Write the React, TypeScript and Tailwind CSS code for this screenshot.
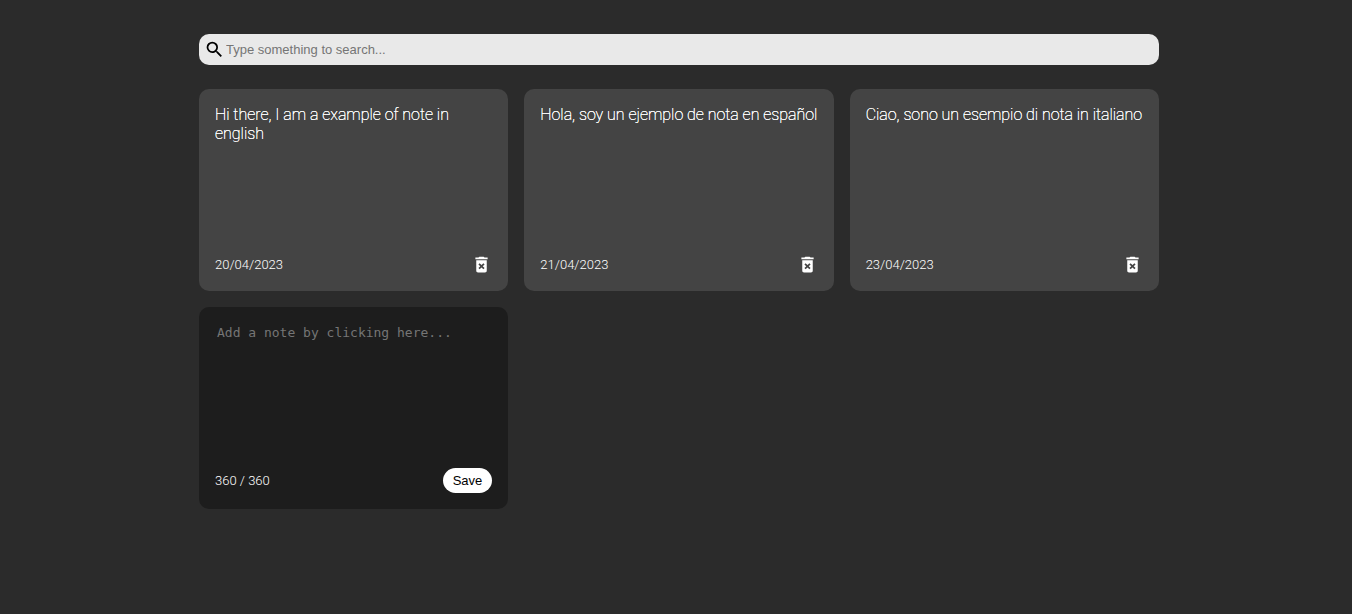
import { useState } from "react";
import { MdDeleteForever, MdSearch } from "react-icons/md";

type NoteData = { id: number; text: string; date: string };

const CHARACTER_LIMIT = 360;

const initialNotes: NoteData[] = [
  { id: 1, text: "Hi there, I am a example of note in english", date: "20/04/2023" },
  { id: 2, text: "Hola, soy un ejemplo de nota en español", date: "21/04/2023" },
  { id: 3, text: "Ciao, sono un esempio di nota in italiano", date: "23/04/2023" },
];

function Search({ value, onChange }: { value: string; onChange: (v: string) => void }) {
  return (
    <label className="flex items-center rounded-[10px] bg-[#e9e9e9] p-[5px] text-black">
      <MdSearch size={21} aria-hidden="true" className="shrink-0" />
      <input
        type="text"
        aria-label="Search notes"
        value={value}
        onChange={(e) => onChange(e.target.value)}
        placeholder="Type something to search..."
        className="min-w-0 flex-1 bg-transparent px-px font-['Liberation_Sans',Arial,sans-serif] text-[13px] leading-4 font-normal outline-none placeholder:text-[#757575]"
      />
    </label>
  );
}

function Note({ note, onDelete }: { note: NoteData; onDelete: (id: number) => void }) {
  return (
    <article className="flex min-h-[202px] flex-col justify-between rounded-[10px] bg-[#444444] p-4">
      <p className="whitespace-pre-wrap [text-shadow:0_0_0_white,0_0_0_white]">{note.text}</p>
      <footer className="flex items-center justify-between">
        <small className="text-[13px] leading-4 font-light">{note.date}</small>
        <button type="button" aria-label="Delete note" onClick={() => onDelete(note.id)} className="cursor-pointer">
          <MdDeleteForever size={21} aria-hidden="true" />
        </button>
      </footer>
    </article>
  );
}

function AddNote({ onAdd }: { onAdd: (text: string) => void }) {
  const [text, setText] = useState("");

  const save = () => {
    if (text.trim().length === 0) return;
    onAdd(text);
    setText("");
  };

  return (
    <article className="flex min-h-[202px] flex-col justify-between rounded-[10px] bg-[#1d1d1d] p-4">
      <textarea
        rows={8}
        aria-label="New note"
        maxLength={CHARACTER_LIMIT}
        value={text}
        onChange={(e) => setText(e.target.value)}
        placeholder="Add a note by clicking here..."
        className="block w-full resize-none bg-transparent p-0.5 font-['DejaVu_Sans_Mono',monospace] text-[13px] leading-4 font-normal outline-none placeholder:text-[#757575]"
      />
      <footer className="flex items-center justify-between">
        <small className="text-[13px] leading-4 font-light">
          {CHARACTER_LIMIT - text.length} / {CHARACTER_LIMIT}
        </small>
        <button
          type="button"
          onClick={save}
          className="cursor-pointer rounded-full bg-white px-[10px] py-[5px] font-['Liberation_Sans',Arial,sans-serif] text-[13px] leading-[15px] font-normal text-black"
        >
          Save
        </button>
      </footer>
    </article>
  );
}

export default function App() {
  const [notes, setNotes] = useState(initialNotes);
  const [query, setQuery] = useState("");

  const addNote = (text: string) =>
    setNotes([...notes, { id: Date.now(), text, date: new Date().toLocaleDateString("en-GB") }]);
  const visible = notes.filter((n) => n.text.toLowerCase().includes(query.toLowerCase()));

  return (
    <div className="min-h-screen bg-[#2b2b2b] pt-[34px] pr-4 pb-6 pl-[22px] font-['Roboto',sans-serif] text-base leading-[19px] font-thin text-white">
      <main className="mx-auto flex max-w-[960px] flex-col gap-6">
        <Search value={query} onChange={setQuery} />
        <section className="grid grid-cols-[repeat(auto-fill,minmax(250px,1fr))] gap-4">
          {visible.map((note) => (
            <Note key={note.id} note={note} onDelete={(id) => setNotes(notes.filter((n) => n.id !== id))} />
          ))}
          <AddNote onAdd={addNote} />
        </section>
      </main>
    </div>
  );
}
